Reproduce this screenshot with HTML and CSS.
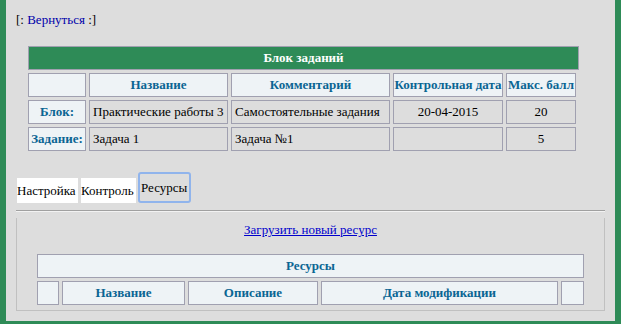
FILE: index.html
```html
<!DOCTYPE html>
<html lang="ru">
<head>
    <meta charset="UTF-8">
    <meta name="viewport" content="width=device-width, initial-scale=1.0">
    <title>Блок заданий</title>
    <link rel="stylesheet" href="styles.css">
</head>
<body>
    <div class="page">
        <div class="back">[: <a href="#">Вернуться</a> :]</div>

        <div class="block">
            <div class="block-title">Блок заданий</div>
            <div class="grid grid-tasks">
                <div class="cell head"></div>
                <div class="cell head">Название</div>
                <div class="cell head">Комментарий</div>
                <div class="cell head">Контрольная дата</div>
                <div class="cell head">Макс. балл</div>

                <div class="cell head">Блок:</div>
                <div class="cell">Практические работы 3</div>
                <div class="cell">Самостоятельные задания</div>
                <div class="cell center">20-04-2015</div>
                <div class="cell center">20</div>

                <div class="cell head">Задание:</div>
                <div class="cell">Задача 1</div>
                <div class="cell">Задача №1</div>
                <div class="cell center"></div>
                <div class="cell center">5</div>
            </div>
        </div>

        <div class="tabs">
            <button class="tab tab-settings">Настройка</button>
            <button class="tab tab-control">Контроль</button>
            <button class="tab active">Ресурсы</button>
        </div>
        <div class="line"></div>

        <div class="panel">
            <div class="upload"><a href="#">Загрузить новый ресурс</a></div>
            <div class="grid grid-res">
                <div class="cell head span">Ресурсы</div>
                <div class="cell head"></div>
                <div class="cell head">Название</div>
                <div class="cell head">Описание</div>
                <div class="cell head">Дата модификации</div>
                <div class="cell head"></div>
            </div>
        </div>
    </div>
</body>
</html>
```

FILE: styles.css
```css
/* Общие стили страницы */
body {
    margin: 0;
    font-family: "Liberation Serif", "Times New Roman", serif;
    font-size: 13px;
    color: #000;
}

.page {
    background-color: #dddddd;
    border-left: 6px solid #2e8b57;
    border-right: 6px solid #2e8b57;
    border-bottom: 3px solid #2e8b57;
    min-height: 324px;
    box-sizing: border-box;
    padding: 12px 10px 0 10px;
}

.back {
    line-height: 15px;
}

.back a {
    color: #0000aa;
    text-decoration: none;
}

/* Таблица блока заданий */
.block {
    margin: 19px 0 0 12px;
}

.block-title {
    width: 551px;
    height: 24px;
    box-sizing: border-box;
    background-color: #2e8b57;
    border: 1px solid #a0a0b0;
    color: #fff;
    font-weight: bold;
    display: flex;
    align-items: center;
    justify-content: center;
    margin-bottom: 3px;
}

.grid {
    display: grid;
    gap: 3px;
    grid-auto-rows: 24px;
}

.grid-tasks {
    grid-template-columns: 58px 139px 159px 110px 70px;
}

.grid-res {
    grid-template-columns: 22px 123px 130px 237px 23px;
}

.cell {
    box-sizing: border-box;
    border: 1px solid #a0a0b0;
    background-color: #dddddd;
    padding: 0 3px;
    display: flex;
    align-items: center;
    white-space: nowrap;
}

.cell.head {
    background-color: #eef3f6;
    color: #0a6593;
    font-weight: bold;
    justify-content: center;
    padding: 0;
}

.cell.center {
    justify-content: center;
}

.cell.span {
    grid-column: 1 / -1;
}

/* Вкладки */
.tabs {
    display: flex;
    align-items: flex-end;
    margin: 21px 0 0 1px;
}

.tab {
    font-family: "Liberation Serif", "Times New Roman", serif;
    font-size: 13px;
    color: #000;
    background-color: #fff;
    border: none;
    padding: 0;
    margin: 0 3px 0 0;
    height: 25px;
    text-align: left;
}

.tab-settings {
    width: 61px;
}

.tab-control {
    width: 55px;
    margin-right: 2px;
}

.tab.active {
    background-color: #dddddd;
    border: 2px solid #90b4ec;
    border-radius: 3px;
    height: 31px;
    min-width: 51px;
    padding: 0 2px 0 1px;
    white-space: nowrap;
}

.line {
    margin-top: 7px;
    border-top: 1px solid #a0a0a0;
    border-bottom: 1px solid #f2f2f2;
}

/* Панель ресурсов */
.panel {
    margin-top: 6px;
    border: 1px solid #c0c0c0;
    border-top: none;
    padding: 4px 20px 5px 20px;
}

.upload {
    text-align: center;
    line-height: 15px;
    margin-bottom: 17px;
}

.upload a {
    color: #0000cc;
}
```
